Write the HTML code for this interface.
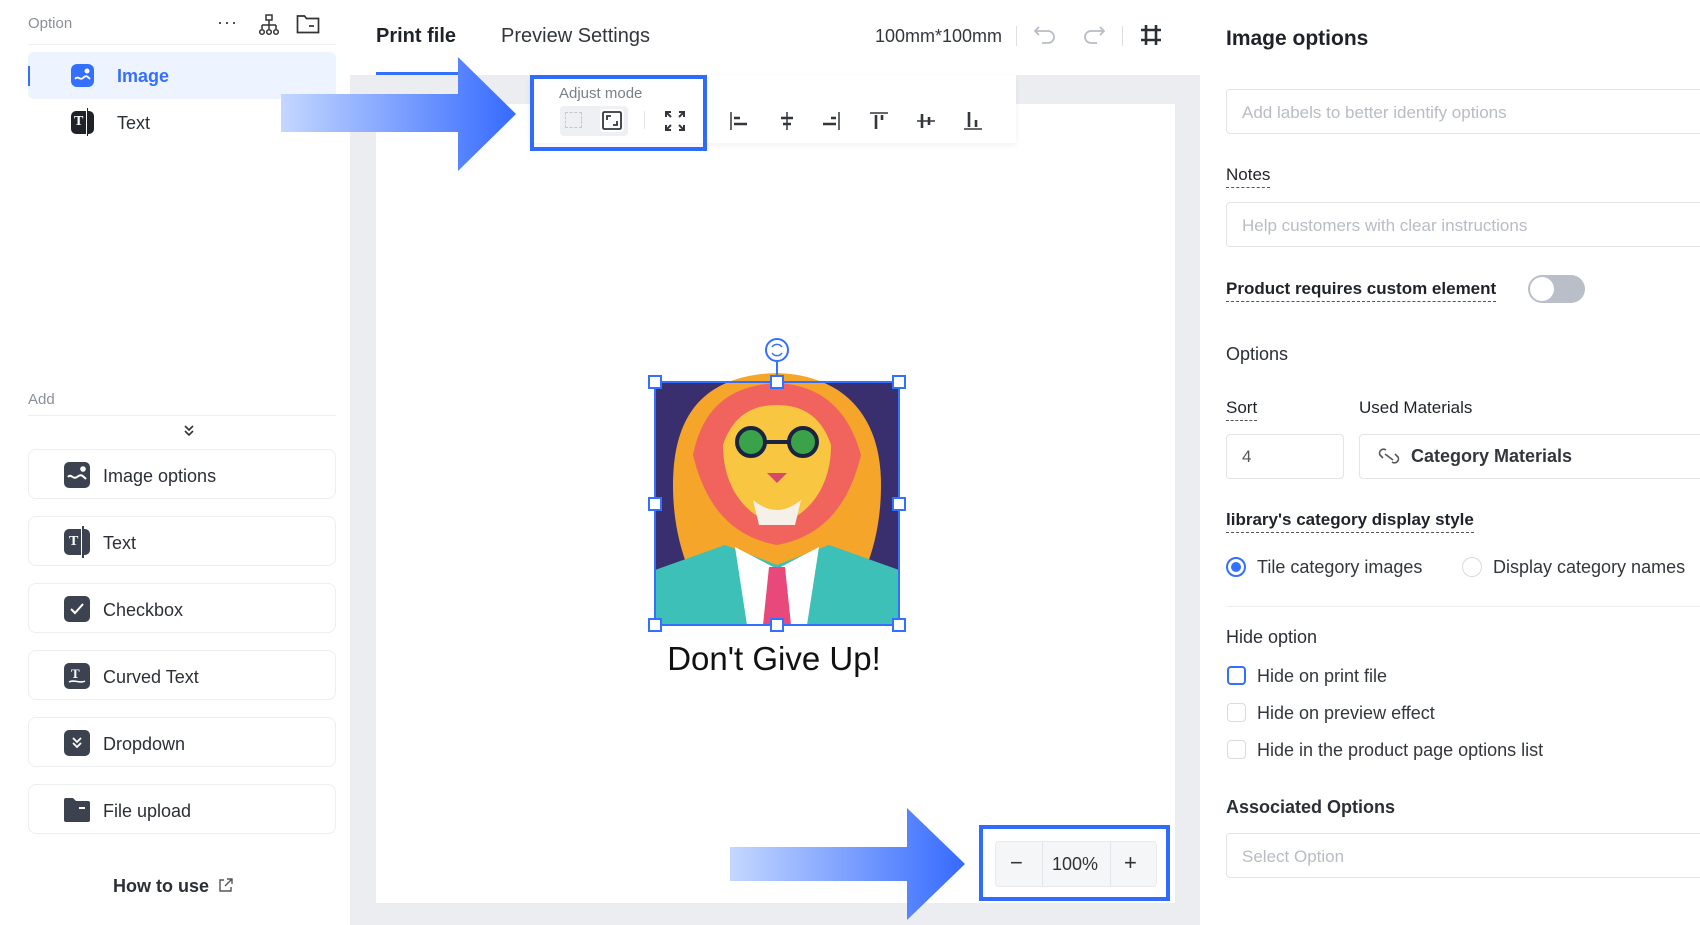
<!DOCTYPE html>
<html><head><meta charset="utf-8"><style>
*{box-sizing:border-box;margin:0;padding:0}
body{width:1700px;height:925px;position:relative;overflow:hidden;background:#fff;font-family:"Liberation Sans",sans-serif;color:#1f2329}
.a{position:absolute}
.t{position:absolute;white-space:nowrap;line-height:1}
.btn{position:absolute;left:28px;width:308px;height:50px;border:1px solid #eceef1;border-radius:8px;background:#fff}
.ic{position:absolute;left:35px;top:12px;width:26px;height:26px;border-radius:5px;background:#3c4250}
.btn .l{position:absolute;left:74px;top:16px;font-size:18px;color:#2b2f36}
.inp{position:absolute;left:1226px;width:500px;height:45px;border:1px solid #e2e4e8;border-radius:4px}
.ph{position:absolute;left:15px;top:13px;font-size:17px;color:#b8bcc4;white-space:nowrap}
.lbl{font-size:17px;color:#1f2329;border-bottom:1px dashed #555;padding-bottom:4px}
.cb{position:absolute;left:1227px;width:19px;height:19px;border:1.5px solid #d8dbe0;border-radius:4px}
.al{position:absolute;top:111px}
</style></head><body>
<!-- left panel -->
<div class="t" style="left:28px;top:16px;font-size:15px;color:#8a8f99">Option</div>
<div class="t" style="left:217px;top:13px;font-size:18px;color:#333;letter-spacing:1px">···</div>
<svg class="a" style="left:258px;top:14px" width="22" height="22" viewBox="0 0 22 22" fill="none" stroke="#333" stroke-width="1.5"><rect x="8" y="1" width="6" height="5"/><path d="M11 6v5M4 11h14M4 11v4M11 11v4M18 11v4"/><circle cx="4" cy="18" r="2.3"/><circle cx="11" cy="18" r="2.3"/><circle cx="18" cy="18" r="2.3"/></svg>
<svg class="a" style="left:296px;top:14px" width="24" height="20" viewBox="0 0 24 20" fill="none" stroke="#333" stroke-width="1.7"><path d="M1.5 2h7l2 2.5h12v14h-21z"/><path d="M13 12h5"/></svg>
<div class="a" style="left:28px;top:44px;width:308px;height:1px;background:#eceef1"></div>
<div class="a" style="left:28px;top:52px;width:308px;height:47px;background:#eef4ff;border-radius:6px"></div>
<div class="a" style="left:28px;top:66px;width:2px;height:20px;background:#3370ff"></div>
<div class="a" style="left:71px;top:64px;width:23px;height:23px;border-radius:6px;background:#3370ff"></div>
<svg class="a" style="left:71px;top:64px" width="23" height="23" fill="none" stroke="#fff" stroke-width="1.8"><path d="M4 15c3-4 5 2 8-1s4-2 7 1"/><circle cx="16" cy="7" r="1.6" fill="#fff"/></svg>
<div class="t" style="left:117px;top:67px;font-size:18px;color:#3370ff;font-weight:bold">Image</div>
<div class="a" style="left:71px;top:111px;width:23px;height:23px;border-radius:5px;background:#1f2329"></div>
<div class="t" style="left:74px;top:115px;font-size:14px;color:#fff;font-weight:bold;font-family:'Liberation Serif',serif">T</div>
<div class="a" style="left:86px;top:108px;width:2px;height:28px;background:#1f2329;border-left:1px solid #fff"></div>
<div class="t" style="left:117px;top:114px;font-size:18px;color:#2b2f36">Text</div>

<div class="t" style="left:28px;top:392px;font-size:15px;color:#8a8f99">Add</div>
<div class="a" style="left:28px;top:415px;width:308px;height:1px;background:#eceef1"></div>
<svg class="a" style="left:183px;top:424px" width="12" height="14" fill="none" stroke="#333" stroke-width="1.6"><path d="M2 2l4 4 4-4M2 7l4 4 4-4"/></svg>

<div class="btn" style="top:449px"><div class="ic"></div><svg class="a" style="left:35px;top:12px" width="26" height="26" fill="none" stroke="#fff" stroke-width="2"><path d="M4 15c3-4 5 3 9 0s5-2 9 2"/><circle cx="19" cy="7" r="1.8" fill="#fff"/></svg><div class="l">Image options</div></div>
<div class="btn" style="top:516px"><div class="ic"></div><div class="t" style="left:40px;top:18px;color:#fff;font-size:14px;font-weight:bold;font-family:'Liberation Serif',serif">T</div><div class="a" style="left:52px;top:9px;width:3px;height:32px;background:#3c4250;border-left:1px solid #fff"></div><div class="l">Text</div></div>
<div class="btn" style="top:583px"><div class="ic"></div><svg class="a" style="left:35px;top:12px" width="26" height="26" fill="none" stroke="#fff" stroke-width="2"><path d="M7 13l4 4 8-9"/></svg><div class="l">Checkbox</div></div>
<div class="btn" style="top:650px"><div class="ic"></div><div class="t" style="left:42px;top:16px;color:#fff;font-size:13px;font-weight:bold;font-family:'Liberation Serif',serif">T</div><svg class="a" style="left:35px;top:12px" width="26" height="26" fill="none" stroke="#fff" stroke-width="1.6"><path d="M5 19c5-3 11 2 16-1"/></svg><div class="l">Curved Text</div></div>
<div class="btn" style="top:717px"><div class="ic"></div><svg class="a" style="left:35px;top:12px" width="26" height="26" fill="none" stroke="#fff" stroke-width="1.8"><path d="M9 8l4 4 4-4M9 13l4 4 4-4"/></svg><div class="l">Dropdown</div></div>
<div class="btn" style="top:784px"><svg class="a" style="left:35px;top:12px" width="26" height="26"><path d="M0 3q0-2 2-2h7l3 3h12q2 0 2 2v17q0 2-2 2H2q-2 0-2-2z" fill="#3c4250"/><path d="M15 11h6" stroke="#fff" stroke-width="2"/></svg><div class="l">File upload</div></div>
<div class="t" style="left:113px;top:877px;font-size:18px;color:#2b2f36;font-weight:bold">How to use</div>
<svg class="a" style="left:218px;top:878px" width="15" height="15" fill="none" stroke="#555" stroke-width="1.4"><path d="M6 2H2v11h11V9M9 1h5v5M14 1L7 8"/></svg>

<!-- top bar -->
<div class="t" style="left:376px;top:26px;font-size:20px;color:#1f2329;font-weight:bold">Print file</div>
<div class="a" style="left:376px;top:72px;width:84px;height:3px;background:#3370ff"></div>
<div class="t" style="left:501px;top:26px;font-size:20px;color:#33373d">Preview Settings</div>
<div class="t" style="left:875px;top:27px;font-size:18px;color:#33373d">100mm*100mm</div>
<div class="a" style="left:1016px;top:26px;width:1px;height:20px;background:#dcdfe4"></div>
<svg class="a" style="left:1033px;top:25px" width="26" height="22" fill="none" stroke="#b8bcc4" stroke-width="1.8"><path d="M6 2L2 6l4 4M2 6h13a6 6 0 010 12H9"/></svg>
<svg class="a" style="left:1080px;top:25px" width="26" height="22" fill="none" stroke="#b8bcc4" stroke-width="1.8"><path d="M20 2l4 4-4 4M24 6H11a6 6 0 000 12h6"/></svg>
<div class="a" style="left:1122px;top:26px;width:1px;height:20px;background:#dcdfe4"></div>
<svg class="a" style="left:1140px;top:24px" width="22" height="22" fill="none" stroke="#2b2f36" stroke-width="2.6"><path d="M6 1v20M16 1v20M1 6h20M1 16h20"/></svg>

<!-- canvas -->
<div class="a" style="left:350px;top:75px;width:850px;height:850px;background:#ebedf1"></div>
<div class="a" style="left:376px;top:104px;width:799px;height:799px;background:#fff"></div>
<div class="a" style="left:530px;top:75px;width:486px;height:68px;background:#fff;box-shadow:0 2px 6px rgba(0,0,0,.06)"></div>
<div class="t" style="left:559px;top:86px;font-size:15px;color:#7a7f88">Adjust mode</div>
<div class="a" style="left:560px;top:106px;width:68px;height:30px;background:#eef0f3;border-radius:4px"></div>
<div class="a" style="left:565px;top:112px;width:17px;height:16px;border:1.5px dashed #c3c7ce"></div>
<div class="a" style="left:600px;top:109px;width:24px;height:23px;background:#fff;border-radius:3px"></div>
<svg class="a" style="left:602px;top:111px" width="20" height="19" fill="none" stroke="#33373d" stroke-width="1.8"><rect x="1" y="1" width="18" height="17" rx="1.5"/><path d="M5 9V5h4M15 10v4h-4"/></svg>
<div class="a" style="left:644px;top:111px;width:1px;height:18px;background:#e3e5e8"></div>
<svg class="a" style="left:665px;top:111px" width="20" height="20" fill="none" stroke="#33373d" stroke-width="2"><path d="M1 6V1h5M14 1h5v5M19 14v5h-5M6 19H1v-5M2 2l4 4M18 2l-4 4M18 18l-4-4M2 18l4-4"/></svg>
<svg class="al" style="left:729px" width="20" height="20" stroke="#33373d" stroke-width="2.6"><path d="M2 1v18" stroke-width="1.5"/><path d="M5 7h6M5 13h13"/></svg>
<svg class="al" style="left:777px" width="20" height="20" stroke="#33373d" stroke-width="2.6"><path d="M10 1v18" stroke-width="1.5"/><path d="M4 7h12M6 13h8"/></svg>
<svg class="al" style="left:821px" width="20" height="20" stroke="#33373d" stroke-width="2.6"><path d="M18 1v18" stroke-width="1.5"/><path d="M10 7h5M2 13h13"/></svg>
<svg class="al" style="left:869px" width="20" height="20" stroke="#33373d" stroke-width="2.6"><path d="M1 2h18" stroke-width="1.5"/><path d="M7 4v14M13 4v5"/></svg>
<svg class="al" style="left:916px" width="20" height="20" stroke="#33373d" stroke-width="2.6"><path d="M1 10h18" stroke-width="1.5"/><path d="M6 3v14M13 6v8"/></svg>
<svg class="al" style="left:963px" width="20" height="20" stroke="#33373d" stroke-width="2.6"><path d="M1 18h18" stroke-width="1.5"/><path d="M6 1v15M13 9v7"/></svg>
<div class="a" style="left:530px;top:75px;width:177px;height:76px;border:4px solid #2f6bff"></div>
<!-- arrow 1 -->
<svg class="a" style="left:280px;top:56px" width="240" height="116"><defs><linearGradient id="g1" x1="0" x2="1"><stop offset="0" stop-color="#c4d7ff"/><stop offset="1" stop-color="#356aff"/></linearGradient></defs><path d="M1 38h177V1l58 57-58 57V76H1z" fill="url(#g1)"/></svg>

<!-- image -->
<svg class="a" style="left:653px;top:335px;overflow:visible" width="248" height="294" viewBox="0 0 248 294">
<rect x="2" y="47" width="244" height="243" fill="#3a2f6e"/>
<path d="M20 150c0-80 40-110 104-112 64 2 104 40 104 112 0 60-20 100-40 130H60C40 250 20 210 20 150z" fill="#f4a52a"/>
<path d="M40 120c10-50 40-70 84-72 40 2 70 22 84 72-10 40-30 80-84 90-54-10-74-50-84-90z" fill="#f0546c" opacity=".8"/>
<path d="M70 110c10-30 30-40 54-40s44 10 54 40c0 40-20 70-54 80-34-10-54-40-54-80z" fill="#f8c640"/>
<circle cx="98" cy="107" r="14" fill="#3aa34a" stroke="#1a2340" stroke-width="4"/><circle cx="150" cy="107" r="14" fill="#3aa34a" stroke="#1a2340" stroke-width="4"/>
<path d="M112 107h24" stroke="#1a2340" stroke-width="4"/>
<path d="M114 138h20l-10 10z" fill="#d84a6a"/>
<path d="M100 165q24 20 48 0l-6 25h-36z" fill="#f6f1e8"/>
<path d="M2 235l70-25 52 20 52-20 70 25v55H2z" fill="#3cc0b8"/>
<path d="M82 212l42 22 42-22-12 78H94z" fill="#fff"/>
<path d="M116 232h16l6 58h-28z" fill="#e8487a"/>
<rect x="2" y="47" width="244" height="243" fill="none" stroke="#3370ff" stroke-width="2"/>
<path d="M124 27v20" stroke="#3370ff" stroke-width="2"/>
<circle cx="124" cy="15" r="11" fill="#fff" stroke="#3370ff" stroke-width="2"/>
<path d="M119 12a6 6 0 0110 0M129 18a6 6 0 01-10 0" fill="none" stroke="#3370ff" stroke-width="1.5"/>
<g fill="#fff" stroke="#3370ff" stroke-width="2"><rect x="-4" y="41" width="12" height="12"/><rect x="118" y="41" width="12" height="12"/><rect x="240" y="41" width="12" height="12"/><rect x="-4" y="163" width="12" height="12"/><rect x="240" y="163" width="12" height="12"/><rect x="-4" y="284" width="12" height="12"/><rect x="118" y="284" width="12" height="12"/><rect x="240" y="284" width="12" height="12"/></g>
</svg>
<div class="t" style="left:663px;top:642px;width:222px;text-align:center;font-size:33px;color:#111">Don't Give Up!</div>

<!-- zoom -->
<div class="a" style="left:995px;top:841px;width:162px;height:46px;background:#f5f6f8;border:1px solid #e8eaee;border-radius:4px"></div>
<div class="a" style="left:1042px;top:842px;width:1px;height:44px;background:#e4e6ea"></div>
<div class="a" style="left:1110px;top:842px;width:1px;height:44px;background:#e4e6ea"></div>
<div class="t" style="left:1010px;top:852px;font-size:22px;color:#333">−</div>
<div class="t" style="left:1052px;top:855px;font-size:18px;color:#333">100%</div>
<div class="t" style="left:1124px;top:852px;font-size:22px;color:#333">+</div>
<div class="a" style="left:979px;top:825px;width:191px;height:76px;border:4px solid #2f6bff"></div>
<svg class="a" style="left:729px;top:807px" width="240" height="114"><defs><linearGradient id="g2" x1="0" x2="1"><stop offset="0" stop-color="#c4d7ff"/><stop offset="1" stop-color="#356aff"/></linearGradient></defs><path d="M1 40h177V1l58 56-58 56V74H1z" fill="url(#g2)"/></svg>

<!-- right panel -->
<div class="t" style="left:1226px;top:28px;font-size:21px;font-weight:bold;color:#1f2329">Image options</div>
<div class="inp" style="top:89px"><div class="ph">Add labels to better identify options</div></div>
<div class="t lbl" style="left:1226px;top:166px">Notes</div>
<div class="inp" style="top:202px"><div class="ph">Help customers with clear instructions</div></div>
<div class="t lbl" style="left:1226px;top:280px;font-weight:bold">Product requires custom element</div>
<div class="a" style="left:1528px;top:275px;width:57px;height:28px;border-radius:14px;background:#b9bec8"></div>
<div class="a" style="left:1530px;top:277px;width:24px;height:24px;border-radius:12px;background:#fff"></div>
<div class="t" style="left:1226px;top:345px;font-size:18px;color:#2b2f36">Options</div>
<div class="t lbl" style="left:1226px;top:399px">Sort</div>
<div class="t" style="left:1359px;top:399px;font-size:17px">Used Materials</div>
<div class="a" style="left:1226px;top:434px;width:118px;height:45px;border:1px solid #e2e4e8;border-radius:4px"></div>
<div class="t" style="left:1242px;top:448px;font-size:17px;color:#555">4</div>
<div class="a" style="left:1359px;top:434px;width:400px;height:45px;border:1px solid #e2e4e8;border-radius:4px"></div>
<svg class="a" style="left:1378px;top:446px" width="22" height="20" fill="none" stroke="#555" stroke-width="1.6"><path d="M8 4a4 4 0 00-6 5l3 3M14 16a4 4 0 006-5l-3-3M7 8l8 6"/></svg>
<div class="t" style="left:1411px;top:447px;font-size:18px;font-weight:bold;color:#33373d">Category Materials</div>
<div class="t lbl" style="left:1226px;top:511px;font-weight:bold">library's category display style</div>
<div class="a" style="left:1226px;top:557px;width:20px;height:20px;border-radius:10px;border:2px solid #3370ff"></div>
<div class="a" style="left:1231px;top:562px;width:10px;height:10px;border-radius:5px;background:#3370ff"></div>
<div class="t" style="left:1257px;top:558px;font-size:18px;color:#33373d">Tile category images</div>
<div class="a" style="left:1462px;top:557px;width:20px;height:20px;border-radius:10px;border:1.5px solid #d8dbe0"></div>
<div class="t" style="left:1493px;top:558px;font-size:18px;color:#33373d">Display category names</div>
<div class="a" style="left:1226px;top:606px;width:474px;height:1px;background:#eceef1"></div>
<div class="t" style="left:1226px;top:628px;font-size:18px;color:#2b2f36">Hide option</div>
<div class="cb" style="top:666px;border:2px solid #3370ff"></div>
<div class="t" style="left:1257px;top:667px;font-size:18px;color:#33373d">Hide on print file</div>
<div class="cb" style="top:703px"></div>
<div class="t" style="left:1257px;top:704px;font-size:18px;color:#33373d">Hide on preview effect</div>
<div class="cb" style="top:740px"></div>
<div class="t" style="left:1257px;top:741px;font-size:18px;color:#33373d">Hide in the product page options list</div>
<div class="t" style="left:1226px;top:798px;font-size:18px;font-weight:bold;color:#2b2f36">Associated Options</div>
<div class="inp" style="top:833px"><div class="ph">Select Option</div></div>
</body></html>
